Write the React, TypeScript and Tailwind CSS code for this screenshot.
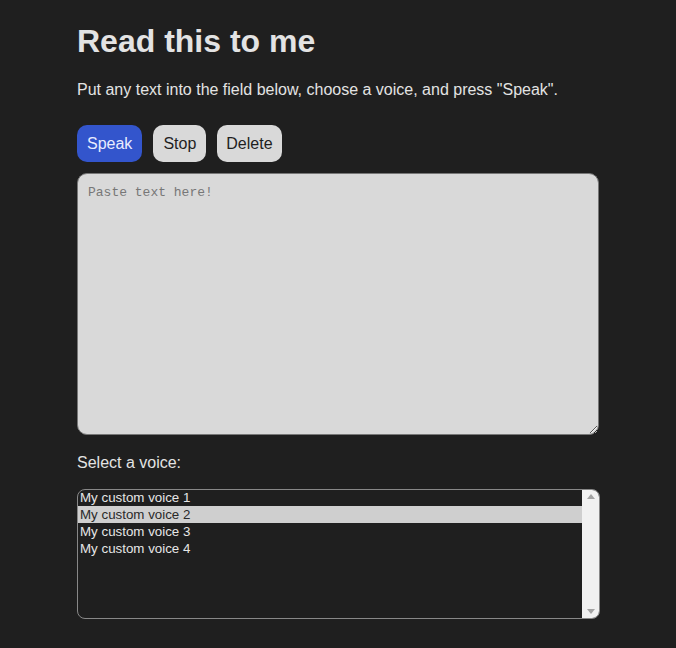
import React, { useState } from 'react';

const voices = ['My custom voice 1', 'My custom voice 2', 'My custom voice 3', 'My custom voice 4'];

export default function App() {
  const [text, setText] = useState('');
  const [selected, setSelected] = useState(1);

  return (
    <div className="min-h-[648px] bg-[#1f1f1f] text-[#e3e3e3] font-['Liberation_Sans',Arial,sans-serif]">
      <div className="w-[522px] ml-[77px] pt-[23px]">
        <h1 className="text-[32px] leading-[37px] font-bold">Read this to me</h1>
        <p className="mt-[21px] text-[16px] leading-[18px]">
          Put any text into the field below, choose a voice, and press "Speak".
        </p>

        <div className="flex gap-[11px] mt-[26px]">
          <button className="h-[37px] px-[10px] rounded-[10px] bg-[#3355cc] text-[#e8ecff] text-[16px]">
            Speak
          </button>
          <button className="h-[37px] px-[10px] rounded-[10px] bg-[#d9d9d9] text-[#1f1f1f] text-[16px]">
            Stop
          </button>
          <button className="h-[37px] px-[9px] rounded-[10px] bg-[#d9d9d9] text-[#1f1f1f] text-[16px]">
            Delete
          </button>
        </div>

        <textarea
          value={text}
          onChange={e => setText(e.target.value)}
          placeholder="Paste text here!"
          className="block mt-[11px] w-[522px] h-[262px] rounded-[10px] border border-[#777] bg-[#d9d9d9] text-[#222] px-[10px] pt-[11px] pb-[9px] text-[13px] leading-[16px] font-['Liberation_Mono','DejaVu_Sans_Mono',monospace] placeholder:text-[#777] outline-none"
        />

        <p className="mt-[19px] text-[16px] leading-[18px]">Select a voice:</p>

        <div className="mt-[17px] flex w-[523px] h-[130px] rounded-[8px] border border-[#888] overflow-hidden">
          <div className="flex-1 -mt-px">
            {voices.map((v, i) => (
              <div
                key={v}
                onClick={() => setSelected(i)}
                className={`h-[17px] pl-[2px] text-[13.33px] leading-[17px] cursor-default ${
                  i === selected ? 'bg-[#cfcfcf] text-[#2a2a2a]' : 'text-[#e6e6e6]'
                }`}
              >
                {v}
              </div>
            ))}
          </div>
          <div className="w-[17px] -my-px bg-[#f1f1f1] flex flex-col items-center justify-between py-[5px]">
            <svg width="8" height="5" viewBox="0 0 8 5"><path d="M4 0L8 5H0z" fill="#a3a3a3" /></svg>
            <svg width="8" height="5" viewBox="0 0 8 5"><path d="M0 0H8L4 5z" fill="#a3a3a3" /></svg>
          </div>
        </div>
      </div>
    </div>
  );
}
